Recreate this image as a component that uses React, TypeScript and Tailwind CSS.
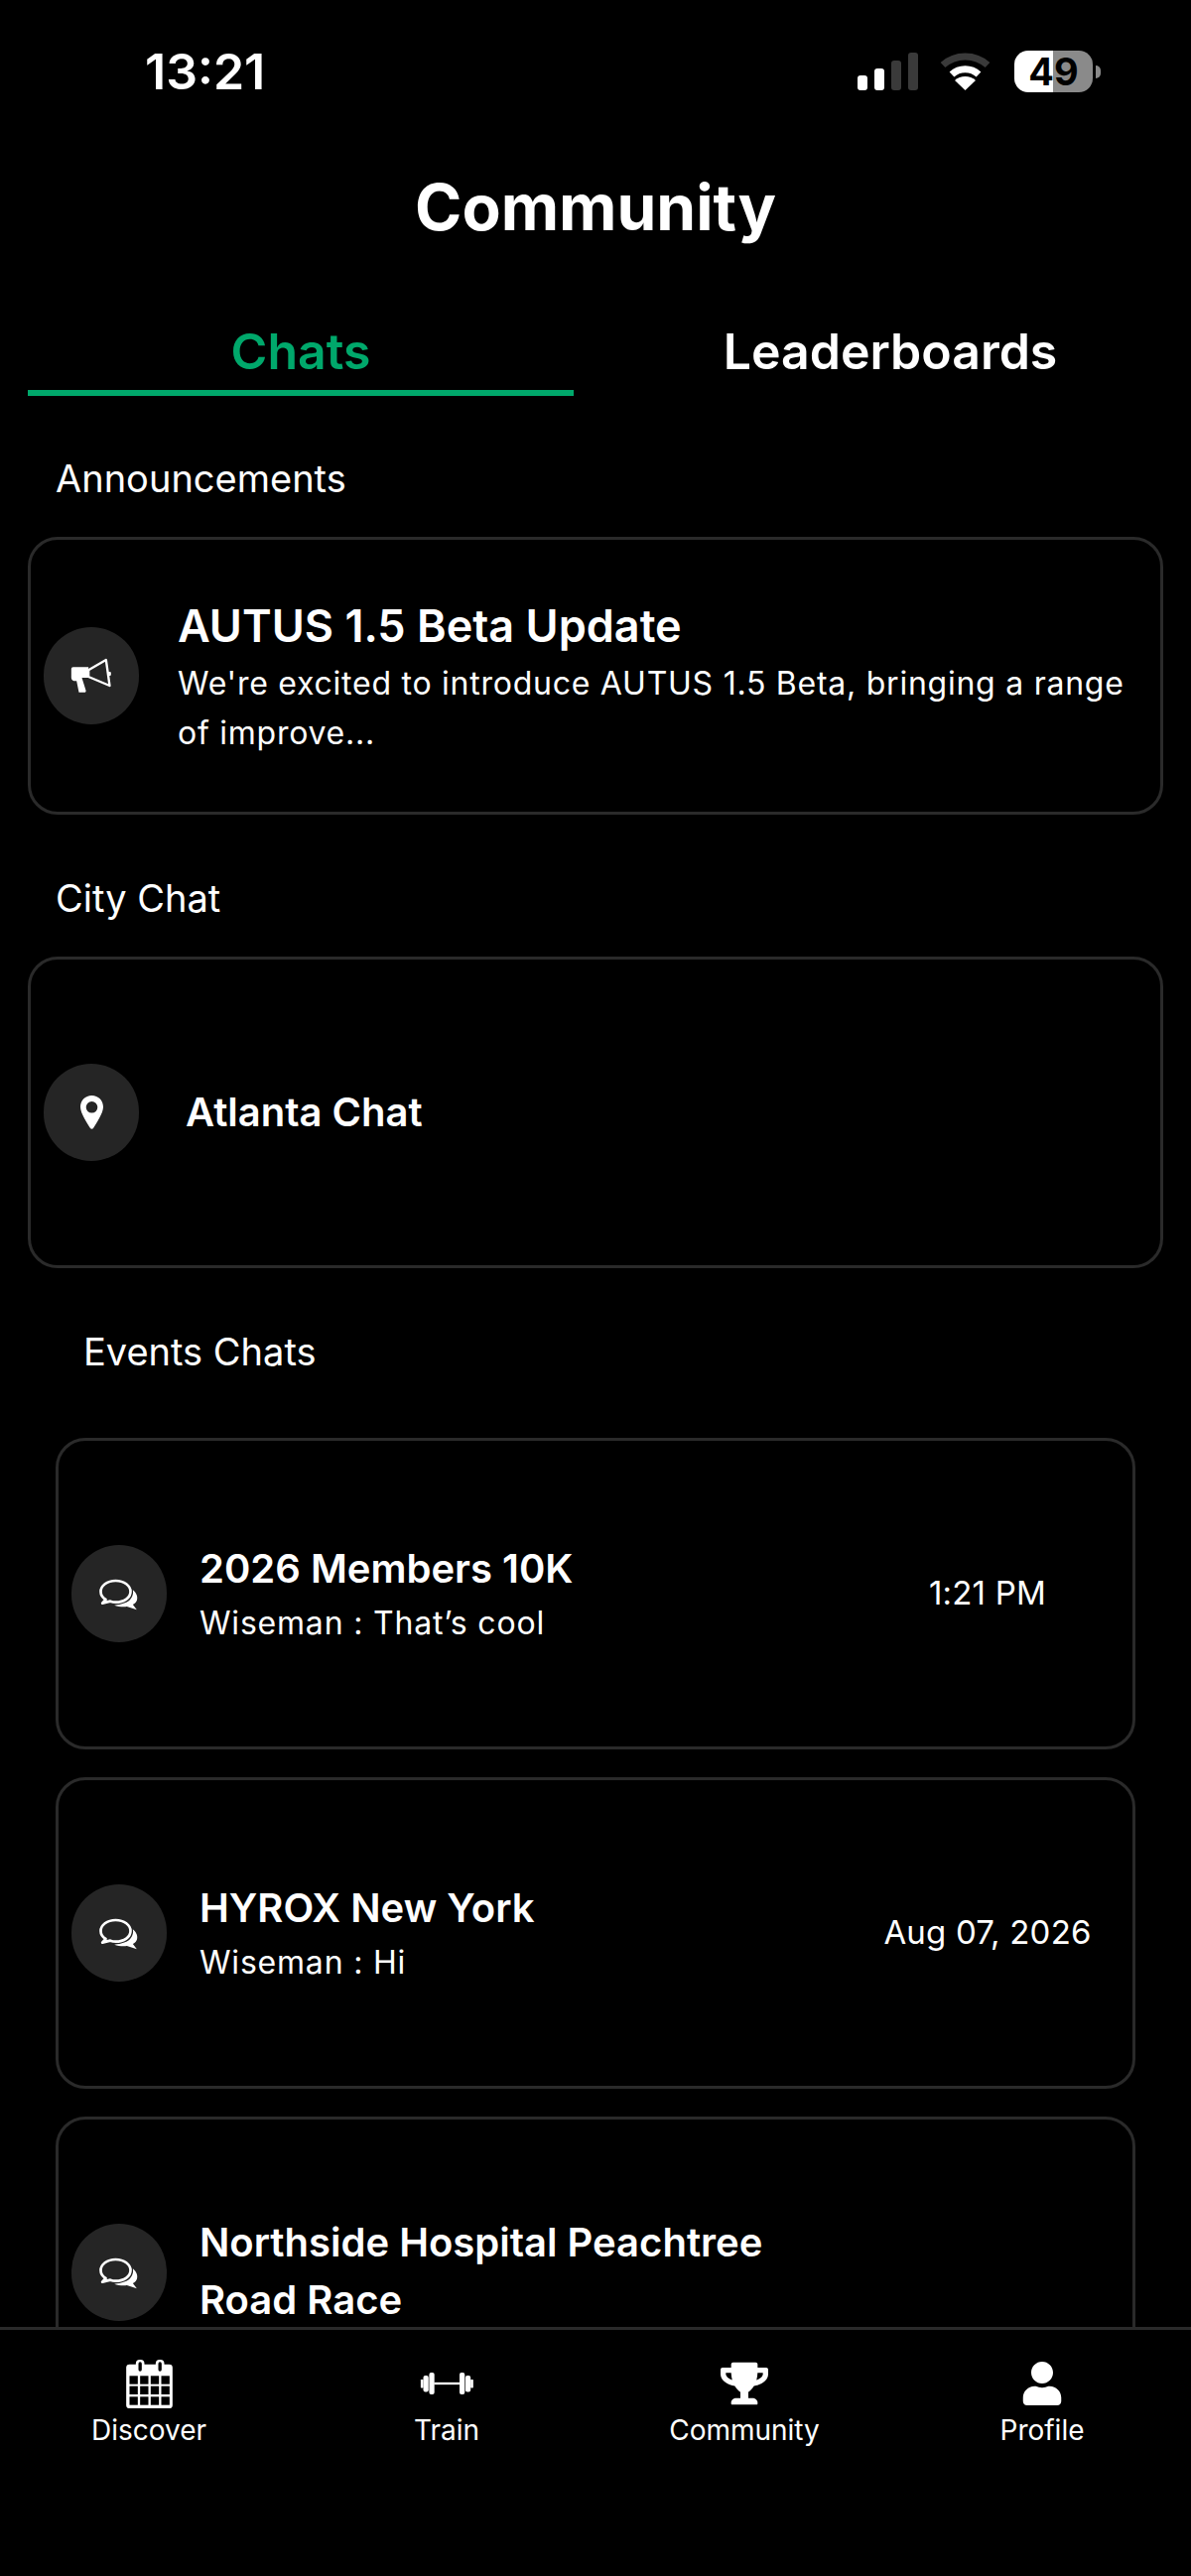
import React from 'react';
import { FaTrophy, FaUser } from 'react-icons/fa';

function ChatsIcon() {
  return (
    <svg width="42" height="35" viewBox="30 30 125 105" fill="none">
      <path
        d="M82 42C56 42 37 57 37 75C37 86 44 94 52 99L42 110L66 104C71 106 76 107 82 107C108 107 127 93 127 75C127 57 108 42 82 42Z"
        stroke="white"
        strokeWidth="8"
        strokeLinejoin="round"
      />
      <path
        d="M134 70C146 80 150 92 146 102C142 110 138 112 134 114L146 130L116 120C104 122 90 120 78 116C100 114 120 108 128 96C134 88 136 80 134 70Z"
        fill="white"
      />
    </svg>
  );
}

function MegaphoneIcon() {
  return (
    <svg width="42" height="36" viewBox="38 70 125 108" fill="none">
      <path
        d="M46 98H92V130H72L84 168C85 172 83 174 79 174H63L56 140H48C43 138 40 134 40 130V104C40 100 42 98 46 98Z"
        fill="white"
      />
      <path d="M92 107L145 76L156 154L92 127Z" stroke="white" strokeWidth="7" strokeLinejoin="round" />
      <rect x="150" y="112" width="10" height="12" rx="3" fill="white" />
    </svg>
  );
}

function PinIcon() {
  return (
    <svg width="23" height="34" viewBox="0 0 23 34">
      <path
        fill="white"
        fillRule="evenodd"
        d="M11.500 0C5 0 0 5 0 11.500C0 18 7 28 10 33a1.800 1.800 0 0 0 3 0C16 28 23 18 23 11.500C23 5 18 0 11.500 0zM11.500 6a5.800 5.800 0 1 1 0 11.600a5.800 5.800 0 0 1 0-11.600z"
      />
    </svg>
  );
}

function CalendarIcon() {
  return (
    <svg width="47" height="49" viewBox="78 38 140 147">
      <rect x="78" y="52" width="140" height="133" rx="10" fill="white" />
      {[107, 167].map((x) => (
        <g key={x}>
          <rect x={x} y="38" width="26" height="40" rx="12" fill="white" />
          <rect x={x + 8} y="45" width="10" height="28" rx="5" fill="black" />
        </g>
      ))}
      {[87, 118, 150].map((y) =>
        [88, 120, 152, 184].map((x) => <rect key={`${x}-${y}`} x={x} y={y} width="25" height="25" fill="black" />),
      )}
    </svg>
  );
}

function DumbbellIcon() {
  return (
    <svg width="57" height="24" viewBox="70 60 170 73">
      <rect x="115" y="93" width="80" height="7" fill="white" />
      <rect x="100" y="63" width="16" height="67" rx="6" fill="white" />
      <rect x="82" y="72" width="16" height="50" rx="6" fill="white" />
      <rect x="74" y="84" width="8" height="26" rx="2" fill="white" />
      <rect x="193" y="63" width="16" height="67" rx="6" fill="white" />
      <rect x="211" y="72" width="16" height="50" rx="6" fill="white" />
      <rect x="227" y="84" width="8" height="26" rx="2" fill="white" />
    </svg>
  );
}

function AvatarIcon({ children }: { children: React.ReactNode }) {
  return (
    <div className="flex h-[98px] w-[96px] flex-none items-center justify-center rounded-full bg-[#252525] text-white">
      {children}
    </div>
  );
}

function SectionLabel({ className, children }: { className: string; children: React.ReactNode }) {
  return <div className={`text-[38px] leading-[46px] text-white ${className}`}>{children}</div>;
}

function EventCard({ title, sub, time }: { title: string; sub?: string; time?: string }) {
  return (
    <div className="flex h-[314px] flex-none items-center rounded-[30px] border-[3px] border-[#2a2a2a] pl-[13px]">
      <AvatarIcon>
        <ChatsIcon />
      </AvatarIcon>
      <div className="ml-[33px] w-[640px] flex-none pb-[3px]">
        <div className="text-[40px] font-semibold leading-[58px] text-white">{title}</div>
        {sub && <div className="mt-[5px] text-[32px] leading-[42px] tracking-[0.8px] text-white">{sub}</div>}
      </div>
      {time && <div className="ml-[43px] w-[222px] flex-none text-center text-[33px] tracking-[0.2px] text-white">{time}</div>}
    </div>
  );
}

const navItems = [
  { label: 'Discover', icon: <CalendarIcon /> },
  { label: 'Train', icon: <DumbbellIcon /> },
  { label: 'Community', icon: <FaTrophy size={48} /> },
  { label: 'Profile', icon: <FaUser size={44} /> },
];

export default function App() {
  return (
    <div className="flex h-[2596px] w-[1200px] flex-col overflow-hidden bg-black font-[Inter,sans-serif] text-white">
      {/* Status bar */}
      <div className="flex h-[142px] flex-none items-center justify-between pl-[146px] pr-[91px] pt-[2px]">
        <span className="text-[50px] font-semibold">13:21</span>
        <div className="flex items-center">
          <div className="flex h-[38px] items-end gap-[7px]">
            <div className="h-[15px] w-[10px] rounded-[3px] bg-white" />
            <div className="h-[22px] w-[10px] rounded-[3px] bg-white" />
            <div className="h-[30px] w-[10px] rounded-[3px] bg-[#3a3a3a]" />
            <div className="h-[38px] w-[10px] rounded-[3px] bg-[#3a3a3a]" />
          </div>
          <svg className="ml-[21px]" width="53" height="38" viewBox="0 0 53 38" fill="none">
            <path d="M4 12.500C16.500 1 36.500 1 49 12.500" stroke="#3a3a3a" strokeWidth="7" />
            <path d="M13 22c7.500-7 19.500-7 27 0" stroke="white" strokeWidth="7" />
            <path d="M26.500 38 16 28c5.500-5.500 15.500-5.500 21 0z" fill="white" />
          </svg>
          <div className="relative ml-[23px] flex h-[42px] w-[79px]">
            <div className="w-[39px] rounded-l-[14px] bg-white" />
            <div className="flex-1 rounded-r-[14px] bg-[#8a8a8a]" />
            <span className="absolute inset-0 flex items-center justify-center text-[38px] font-bold leading-none text-black">49</span>
          </div>
          <div className="ml-[3px] h-[13px] w-[5px] rounded-r-full bg-[#8a8a8a]" />
        </div>
      </div>

      {/* Title */}
      <div className="flex h-[132px] flex-none items-center justify-center pt-[2px] text-[64px] font-bold">Community</div>

      {/* Tabs */}
      <div className="flex flex-none pl-[28px] pr-[28px] pt-[50px]">
        <div className="w-[550px] border-b-[6px] border-[#00a86b] pb-[9px] text-center text-[50px] font-semibold leading-[60px] text-[#00a86b]">
          Chats
        </div>
        <div className="flex-1 pl-[44px] text-center text-[50px] font-semibold leading-[60px]">Leaderboards</div>
      </div>

      {/* List */}
      <div className="flex min-h-0 flex-1 flex-col overflow-hidden px-[28px]">
        <SectionLabel className="ml-[28px] mb-[36px] mt-[60px]">Announcements</SectionLabel>
        <div className="flex h-[280px] flex-none items-center rounded-[30px] border-[3px] border-[#2a2a2a] pl-[13px]">
          <AvatarIcon>
            <MegaphoneIcon />
          </AvatarIcon>
          <div className="ml-[39px] flex-1 pt-[3px]">
            <div className="text-[45px] font-semibold leading-[58px]">AUTUS 1.5 Beta Update</div>
            <div className="mt-[4px] text-[32px] leading-[50px] tracking-[0.75px]">
              We're excited to introduce AUTUS 1.5 Beta, bringing a range of improve...
            </div>
          </div>
        </div>

        <SectionLabel className="ml-[28px] mb-[36px] mt-[61px]">City Chat</SectionLabel>
        <div className="flex h-[314px] flex-none items-center rounded-[30px] border-[3px] border-[#2a2a2a] pl-[13px]">
          <AvatarIcon>
            <PinIcon />
          </AvatarIcon>
          <div className="ml-[47px] text-[40px] font-semibold">Atlanta Chat</div>
        </div>

        <SectionLabel className="ml-[56px] mb-[64px] mt-[61px]">Events Chats</SectionLabel>
        <div className="flex flex-col gap-[28px] px-[28px]">
          <EventCard title="2026 Members 10K" sub="Wiseman : That’s cool" time="1:21 PM" />
          <EventCard title="HYROX New York" sub="Wiseman : Hi" time="Aug 07, 2026" />
          <EventCard title="Northside Hospital Peachtree Road Race" />
        </div>
      </div>

      {/* Bottom nav */}
      <div className="grid h-[251px] flex-none grid-cols-4 border-t-[3px] border-[#2a2a2a] bg-black">
        {navItems.map((item) => (
          <div key={item.label} className="flex flex-col items-center pt-[29px]">
            <div className="flex h-[50px] items-center justify-center">{item.icon}</div>
            <div className="mt-[4px] text-[28px] leading-[36px]">{item.label}</div>
          </div>
        ))}
      </div>
    </div>
  );
}
